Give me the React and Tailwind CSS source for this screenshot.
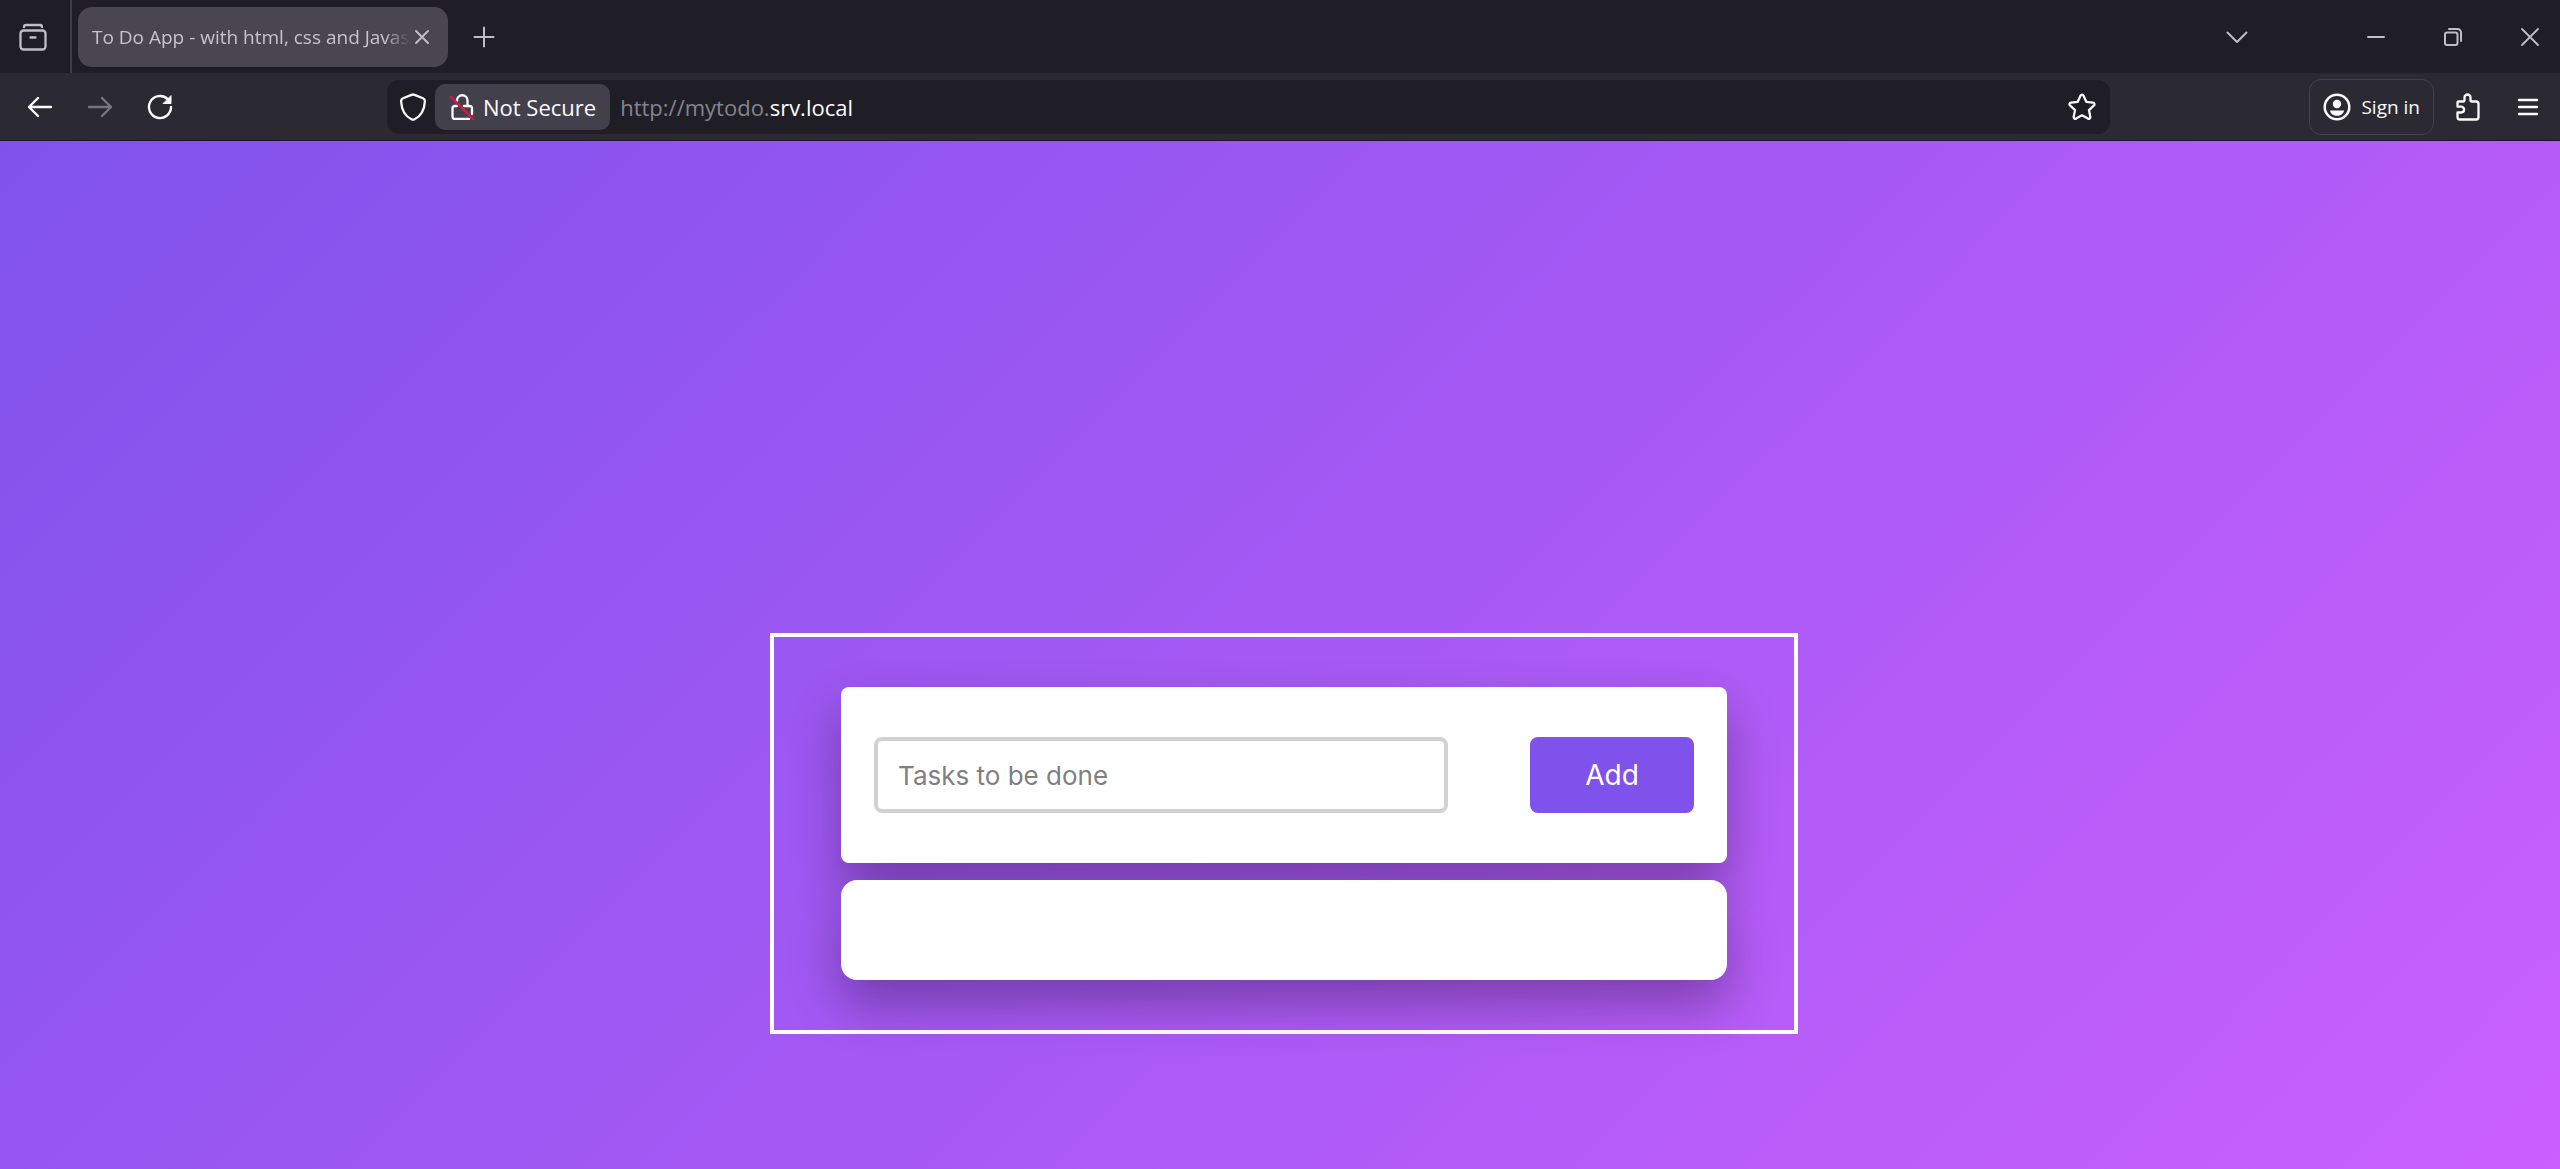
import { useState } from 'react'

function Icon({ size = 28, stroke = 2, className = '', children }) {
  return (
    <svg
      width={size}
      height={size}
      viewBox={`0 0 ${size} ${size}`}
      fill="none"
      stroke="currentColor"
      strokeWidth={stroke}
      strokeLinecap="round"
      strokeLinejoin="round"
      className={`shrink-0 ${className}`}
      aria-hidden="true"
    >
      {children}
    </svg>
  )
}

function IconButton({ label, className = '', children }) {
  return (
    <button type="button" aria-label={label} className={`flex items-center justify-center shrink-0 w-[60px] h-12 ${className}`}>
      {children}
    </button>
  )
}

function TabBar() {
  return (
    <div className="flex items-center h-[73px] bg-[#1f1e26] text-[#bfbdc6]">
      {/* Firefox view */}
      <div className="flex items-center justify-center shrink-0 w-[72px] h-full pl-1 pr-2 border-r-2 border-[#3d3b43]">
        <button type="button" aria-label="Firefox View">
          <Icon stroke={2.3}>
            <path d="M5 4.2C5 2.6 5.8 2 7 2h14c1.200 0 2 .6 2 2.200" />
            <rect x="1.500" y="7.500" width="25" height="19" rx="3" />
            <path d="M11.500 14.500h5" />
          </Icon>
        </button>
      </div>

      <div className="flex items-center shrink-0 w-[370px] h-[60px] ml-1.5 px-3.5 rounded-[14px] bg-[#494650]">
        <span className="flex-1 overflow-hidden whitespace-nowrap text-[19px] leading-7 text-[#c6c3cd] [mask-image:linear-gradient(to_right,black_92%,transparent)]">
          To Do App - with html, css and Javascript
        </span>
        <button type="button" aria-label="Close tab">
          <Icon size={24}>
            <path d="M6 6l12 12M18 6L6 18" />
          </Icon>
        </button>
      </div>

      <IconButton label="New tab" className="ml-1.5">
        <Icon size={24}>
          <path d="M12 2.500v19M2.500 12h19" />
        </Icon>
      </IconButton>

      <div className="flex items-center ml-auto">
        <IconButton label="List all tabs" className="mr-[79px]">
          <Icon size={24}>
            <path d="M2.500 7.500L12 17l9.500-9.500" />
          </Icon>
        </IconButton>
        <div className="flex items-center gap-[17px]">
          <IconButton label="Minimize">
            <Icon size={18}>
              <path d="M1 9h16" />
            </Icon>
          </IconButton>
          <IconButton label="Restore">
            <Icon size={18}>
              <rect x="1" y="4.500" width="12.500" height="12.500" rx="2" />
              <path d="M5 1h8.500A3.500 3.500 0 0 1 17 4.500V13" />
            </Icon>
          </IconButton>
          <IconButton label="Close window">
            <Icon size={18} stroke={1.8}>
              <path d="M1 1l16 16M17 1L1 17" />
            </Icon>
          </IconButton>
        </div>
      </div>
    </div>
  )
}

function Toolbar() {
  return (
    <div className="flex items-center h-[68px] pl-2.5 border-b border-[#1f1530] bg-[#2b2a33] text-[#fbfbfe]">
      <IconButton label="Back">
        <Icon size={26} stroke={2.4}>
          <path d="M24 13H2M11 4l-9 9 9 9" />
        </Icon>
      </IconButton>
      <IconButton label="Forward" className="text-[#77757f]">
        <Icon size={26} stroke={2.4}>
          <path d="M2 13h22M15 4l9 9-9 9" />
        </Icon>
      </IconButton>
      <IconButton label="Reload">
        <Icon size={26} stroke={2.4}>
          <path d="M24 13A11 11 0 1 1 20.500 5" />
          <path d="M24 2v7.500h-7.500z" fill="currentColor" stroke="currentColor" strokeWidth="1" />
        </Icon>
      </IconButton>

      <div className="flex items-center flex-1 h-[54px] ml-[197px] mr-[199px] pl-3 pr-3.5 rounded-xl bg-[#1f1e26]">
        <button type="button" aria-label="Tracking protection">
          <Icon stroke={2.3}>
            <path d="M14 1.500c.5 0 1 .2 1.500.4l8.500 3.400c1.200.5 2 1.600 1.900 2.900C25.500 16 22 23 15.500 26.300a3.300 3.300 0 0 1-3 0C6 23 2.500 16 2.100 8.200 2 6.900 2.800 5.800 4 5.300l8.500-3.400c.5-.2 1-.4 1.500-.4z" />
          </Icon>
        </button>
        <button type="button" className="flex items-center shrink-0 gap-2 h-[46px] ml-2 px-3.5 rounded-[10px] bg-[#42404a] text-[22px] leading-8">
          <Icon size={26} stroke={2.3}>
            <path d="M8 7.500V6.500a5.200 5.200 0 0 1 10.500 0V12" />
            <path d="M8 12H6A2.500 2.500 0 0 0 3.500 14.500v8A2.500 2.500 0 0 0 6 25h14M15 12h5.500a2.500 2.500 0 0 1 2.500 2.500V20" />
            <path d="M2 3l22 22" stroke="#c81e46" strokeWidth="2.600" />
          </Icon>
          Not Secure
        </button>
        <div role="textbox" aria-label="Address" className="flex-1 pl-2.5 whitespace-nowrap text-[22px] leading-8">
          <span className="text-[#85848c]">http://mytodo.</span>srv.local
        </div>
        <button type="button" aria-label="Bookmark this page">
          <Icon stroke={2.3}>
            <path d="M12.600 2.500c.6-1.200 2.200-1.200 2.800 0l2.900 6.300 6.800.9c1.400.2 1.900 1.700.9 2.700l-5 4.700 1.300 6.800c.2 1.300-1.100 2.300-2.300 1.700L14 22.300l-6 3.300c-1.200.6-2.500-.4-2.300-1.700L7 17.100l-5-4.700c-1-1-.5-2.500.9-2.700l6.800-.9z" />
          </Icon>
        </button>
      </div>

      <button type="button" className="flex items-center shrink-0 gap-2.5 h-[56px] mr-1 px-[13px] rounded-xl border border-[#42414d] text-[19px] leading-7">
        <Icon stroke={2.5}>
          <circle cx="14" cy="14" r="12.300" />
          <circle cx="14" cy="11" r="4.200" fill="currentColor" stroke="none" />
          <path d="M7 17.500h14c-.4 3.300-3.500 5.300-7 5.300s-6.600-2-7-5.300z" fill="currentColor" stroke="none" />
        </Icon>
        Sign in
      </button>
      <IconButton label="Extensions">
        <Icon stroke={2.3}>
          <path d="M4.500 8.500h5a1 1 0 0 0 1-1V4.500a3 3 0 0 1 6 0v3a1 1 0 0 0 1 1H22a2.500 2.500 0 0 1 2.500 2.500v13a2.500 2.500 0 0 1-2.500 2.500H6A2.500 2.500 0 0 1 3.500 24v-4.500h3.700a2.900 2.900 0 0 0 0-5.800H3.500V9.500a1 1 0 0 1 1-1z" />
        </Icon>
      </IconButton>
      <IconButton label="Open menu" className="mr-0.5">
        <Icon size={22} stroke={2.4}>
          <path d="M2 4h18M2 11h18M2 18h18" />
        </Icon>
      </IconButton>
    </div>
  )
}

function TodoApp() {
  const [task, setTask] = useState('')

  return (
    <main className="flex flex-1 items-end justify-center pl-2 pb-[135px] bg-[linear-gradient(135deg,#8052ec,#ca60fd)] font-[Inter,sans-serif]">
      <div className="w-full max-w-[1028px] px-[67px] py-[50px] border-4 border-white">
        <form
          onSubmit={e => e.preventDefault()}
          className="flex justify-between px-[33px] py-[50px] rounded-lg bg-white shadow-[0_25px_50px_rgba(0,0,0,0.3)]"
        >
          <input
            type="text"
            aria-label="Tasks to be done"
            value={task}
            onChange={e => setTask(e.target.value)}
            placeholder="Tasks to be done"
            className="w-[70%] h-[76px] px-5 rounded-lg border-4 border-[#d2d2d2] text-[26px] text-gray-800 placeholder:text-[#808080] focus:outline-none focus:border-[#8052ec]"
          />
          <button type="submit" className="w-1/5 h-[76px] rounded-lg bg-[#8052ec] text-[28px] text-white">
            Add
          </button>
        </form>

        {/* Task list, empty */}
        <div className="h-[100px] mt-[17px] rounded-2xl bg-white shadow-[0_25px_50px_rgba(0,0,0,0.3)]" />
      </div>
    </main>
  )
}

export default function App() {
  return (
    <div className="flex flex-col min-h-screen font-['Open_Sans','Noto_Sans',sans-serif]">
      <header>
        <TabBar />
        <Toolbar />
      </header>
      <TodoApp />
    </div>
  )
}
